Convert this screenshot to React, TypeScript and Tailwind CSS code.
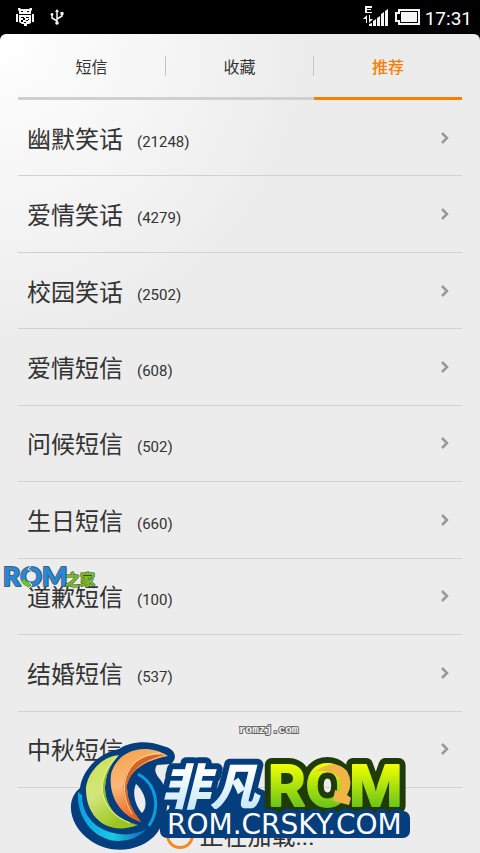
import { useState } from 'react';

const tabs = ['短信', '收藏', '推荐'];

const categories = [
  { name: '幽默笑话', count: 21248 },
  { name: '爱情笑话', count: 4279 },
  { name: '校园笑话', count: 2502 },
  { name: '爱情短信', count: 608 },
  { name: '问候短信', count: 502 },
  { name: '生日短信', count: 660 },
  { name: '道歉短信', count: 100 },
  { name: '结婚短信', count: 537 },
  { name: '中秋短信', count: 6 },
];

function StatusBar() {
  return (
    <header className="flex h-[34px] items-center justify-between bg-black pl-4 pr-2 text-white">
      <div className="flex items-center gap-4">
        {/* Android debugging */}
        <svg width="18" height="19" viewBox="0 0 18 19" fill="#f5f5f5">
          <path d="M2 0h2l1 1h8l1-1h2v2l-1 1v3H3V3L2 2zM0 6h2v8H0zM16 6h2v8h-2zM3 7h12v8l-2 1h-2v2H8v-2H6l-3-2z" />
          <path d="M5 3h2v1H5zM11 3h2v1h-2zM5 9h3v1H5zM10 9h3v1h-3zM5 12h2v2H5zM7 10h2v2H7zM10 12h2v1h-2zM8 14h2v1H8zM12 11h1v1h-1z" fill="#000" />
        </svg>
        {/* USB */}
        <svg width="14" height="16" viewBox="0 0 14 16" fill="none" stroke="#f5f5f5" strokeWidth="1.500">
          <path d="M7 2v12M7 12L2 9V6M7 10l5-3V4" />
          <path d="M7 0l2 3H5z" fill="#f5f5f5" stroke="none" />
          <circle cx="7" cy="14" r="1.800" fill="#f5f5f5" stroke="none" />
          <circle cx="2" cy="5.500" r="1.400" fill="#f5f5f5" stroke="none" />
          <path d="M10.500 3h3v3h-3z" fill="#f5f5f5" stroke="none" />
        </svg>
      </div>
      <div className="flex items-center">
        {/* EDGE data and signal bars */}
        <svg width="26" height="22" viewBox="0 0 26 22" fill="#f5f5f5">
          <path d="M2 0h7v2H4v1h4v1H4v2h5v1H2z" />
          <path d="M4 9v8H3v-4H0l4-4zM6 9h1v4h3l-4 4z" />
          <path d="M6 20v-2l3-1v3zM10 20v-5l3-2v7zM14 20v-8l3-2v10zM18 20V8l3-2v14zM22 20V5l3-2v17z" />
        </svg>
        <svg className="ml-1.5" width="26" height="16" viewBox="0 0 26 16" fill="#f5f5f5">
          <path d="M4 1h20v14H4v-3H1V4h3z" fill="none" stroke="#f5f5f5" strokeWidth="2" />
          <path d="M6 3h16v10H6z" />
        </svg>
        <time className="ml-1 pt-1 text-[19px] leading-6">17:31</time>
      </div>
    </header>
  );
}

function RomHomeMark() {
  return (
    <svg className="pointer-events-none absolute left-0 top-[560px]" width="102" height="34" viewBox="0 0 102 34">
      <g fontWeight="900" paintOrder="stroke" strokeLinejoin="round">
        <text x="3" y="26" fontSize="27" fontFamily="Lato, sans-serif" fill="#2389dc" stroke="#4b5d68" strokeWidth="2">ROM</text>
        <text x="65" y="25" fontSize="15" fontFamily="'Noto Sans CJK SC', sans-serif" fill="#79b927" stroke="#35511f" strokeWidth="1">之家</text>
      </g>
      <path d="M23 20q2 5 7 5" fill="none" stroke="#6abf2b" strokeWidth="4" />
      <path d="M27 21l4 3-3 4z" fill="#6abf2b" />
      <path d="M32 5l-4 4 4 3M29 22l3 3-3 3" fill="none" stroke="#eee" strokeWidth="1" />
    </svg>
  );
}

function CrskyMark() {
  return (
    <svg className="pointer-events-none absolute left-[66px] top-[738px]" width="350" height="115" viewBox="66 738 350 115">
      <defs>
        <linearGradient id="lime" x1="0" y1="0" x2="0" y2="1">
          <stop offset="0.200" stopColor="#efff00" />
          <stop offset="0.850" stopColor="#62c01c" />
        </linearGradient>
        <linearGradient id="ice" x1="0" y1="0" x2="0" y2="1">
          <stop offset="0.300" stopColor="#ffffff" />
          <stop offset="1" stopColor="#b8e2fa" />
        </linearGradient>
        <linearGradient id="leaf" x1="0" y1="0" x2="0.500" y2="1">
          <stop offset="0" stopColor="#c9e04c" />
          <stop offset="0.500" stopColor="#d4e67c" />
          <stop offset="1" stopColor="#9ac51c" />
        </linearGradient>
        <linearGradient id="flame" x1="0" y1="0" x2="0.300" y2="1">
          <stop offset="0" stopColor="#f6a046" />
          <stop offset="0.500" stopColor="#f9b878" />
          <stop offset="1" stopColor="#f0601a" />
        </linearGradient>
        <linearGradient id="sea" x1="0" y1="0" x2="1" y2="0">
          <stop offset="0" stopColor="#0a9fe4" />
          <stop offset="0.500" stopColor="#1cc8e0" />
          <stop offset="1" stopColor="#0a60b0" />
        </linearGradient>
        <text id="rom" x="268" y="806" fontSize="57" fontWeight="700" fontFamily="Inter, sans-serif">ROM</text>
      </defs>
      {/* swirl */}
      <path
        fillRule="evenodd"
        d="M171 764C179 757 174 748 163 746C149 740 130 741 119 749C98 753 82 771 80 788C64 801 70 827 91 841C111 855 142 852 157 833C170 815 171 790 158 777Q153 770 157 765ZM136 784C145 792 149 806 142 813C135 805 132 793 136 784Z"
        fill="#043e7d"
      />
      <path d="M78 792C76 817 94 841 119 841Q136 841 148 828Q134 836 119 834C96 831 82 816 82 795Z" fill="url(#sea)" />
      <path d="M138 774C158 785 160 809 149 826" fill="none" stroke="#089ee0" strokeWidth="3" />
      <path d="M119 755C98 757 85 778 86 791C87 819 109 836 138 825C115 820 105 805 105 787Q106 768 119 755Z" fill="url(#leaf)" />
      <path d="M118 756C93 779 96 813 138 825C115 820 105 805 105 787Q106 768 118 756Z" fill="#8fbe1d" />
      <path d="M117 757C94 779 98 811 130 823" fill="none" stroke="#edf5a8" strokeWidth="1" />
      <path d="M168 756C148 743 118 748 111 774C108 800 124 817 141 822Q126 804 127 785Q132 763 168 756Z" fill="url(#flame)" />
      <path d="M164 755C130 751 112 784 132 814Q136 819 141 822Q126 804 127 785Q132 763 164 755Z" fill="#d66320" />
      <path d="M160 753C130 754 114 783 132 814" fill="none" stroke="#ffd7a5" strokeWidth="1" />
      {/* wordmark */}
      <rect x="160" y="811" width="250" height="27" rx="7" fill="#043e7d" />
      <path d="M172 798h218v18H172z" fill="#043e7d" />
      <text x="161" y="805" fontSize="49" fontWeight="900" fontStyle="italic" fontFamily="'Noto Sans CJK SC', sans-serif" paintOrder="stroke" strokeLinejoin="round" fill="url(#ice)" stroke="#043e7d" strokeWidth="12">非凡</text>
      <use href="#rom" fill="#1e3b08" stroke="#1e3b08" strokeWidth="14" strokeLinejoin="round" />
      <use href="#rom" fill="url(#lime)" stroke="url(#lime)" strokeWidth="2" strokeLinejoin="round" />
      <path d="M315 772Q334 757 347 771Q354 783 347 795L351 798L349 805L333 801L335 790L339 792Q344 777 332 773Q323 769 315 772Z" fill="#f0b544" />
      <text x="167" y="834" fontSize="28" fontFamily="'DejaVu Sans', sans-serif" paintOrder="stroke" strokeLinejoin="round" fill="#fff" stroke="#043e7d" strokeWidth="8">ROM.CRSKY.COM</text>
    </svg>
  );
}

export default function App() {
  const [activeTab, setActiveTab] = useState('推荐');

  return (
    <div className="relative flex min-h-screen flex-col overflow-hidden bg-black font-['Roboto','Noto_Sans_CJK_SC',sans-serif] text-[#333]">
      <StatusBar />
      <main className="flex flex-1 flex-col rounded-t-md bg-[#ececec] bg-[radial-gradient(circle_at_top_left,#ffffff_0px,#f8f8f8_120px,#ececec_310px)]">
        <nav className="mx-[18px] grid grid-cols-3">
          {tabs.map((tab, index) => (
            <button
              key={tab}
              type="button"
              onClick={() => setActiveTab(tab)}
              className={`flex h-[66px] items-center border-b-3 text-base ${
                activeTab === tab ? 'border-[#ff7e00] font-medium text-[#ff7e00]' : 'border-[#cfcfcf]'
              }`}
            >
              <span className={`flex-1 pt-1 leading-4 ${index < 2 ? 'border-r border-[#c4c4c4]' : ''}`}>{tab}</span>
            </button>
          ))}
        </nav>

        <ul className="mx-[18px] grid flex-1 auto-rows-fr">
          {categories.map((category) => (
            <li key={category.name} className="border-b border-[#d2d2d2]">
              <button type="button" className="flex h-full w-full items-center pl-[9px] pr-3 text-left">
                <span className="pt-1 text-2xl">{category.name}</span>
                <span className="ml-3.5 pt-2 text-[15px] leading-6">({category.count})</span>
                <svg className="ml-auto" width="10" height="14" viewBox="0 0 10 14" fill="none" stroke="#999" strokeWidth="2.500">
                  <path d="M2 2l5 5-5 5" />
                </svg>
              </button>
            </li>
          ))}
        </ul>

        <div className="flex h-[65px] items-center justify-center gap-1.5 pt-7">
          <span className="size-7 rounded-full border-3 border-[#f58a25]" />
          <span className="pt-1 text-2xl">正在加载...</span>
        </div>
      </main>

      <RomHomeMark />
      <svg className="pointer-events-none absolute left-[236px] top-[720px]" width="64" height="18" viewBox="0 0 64 18">
        <text x="3" y="13" fontSize="11" fontWeight="700" fontFamily="'Liberation Mono', monospace" paintOrder="stroke" fill="#f4f4f4" stroke="#666" strokeWidth="2">romzj.com</text>
      </svg>
      <CrskyMark />
    </div>
  );
}
